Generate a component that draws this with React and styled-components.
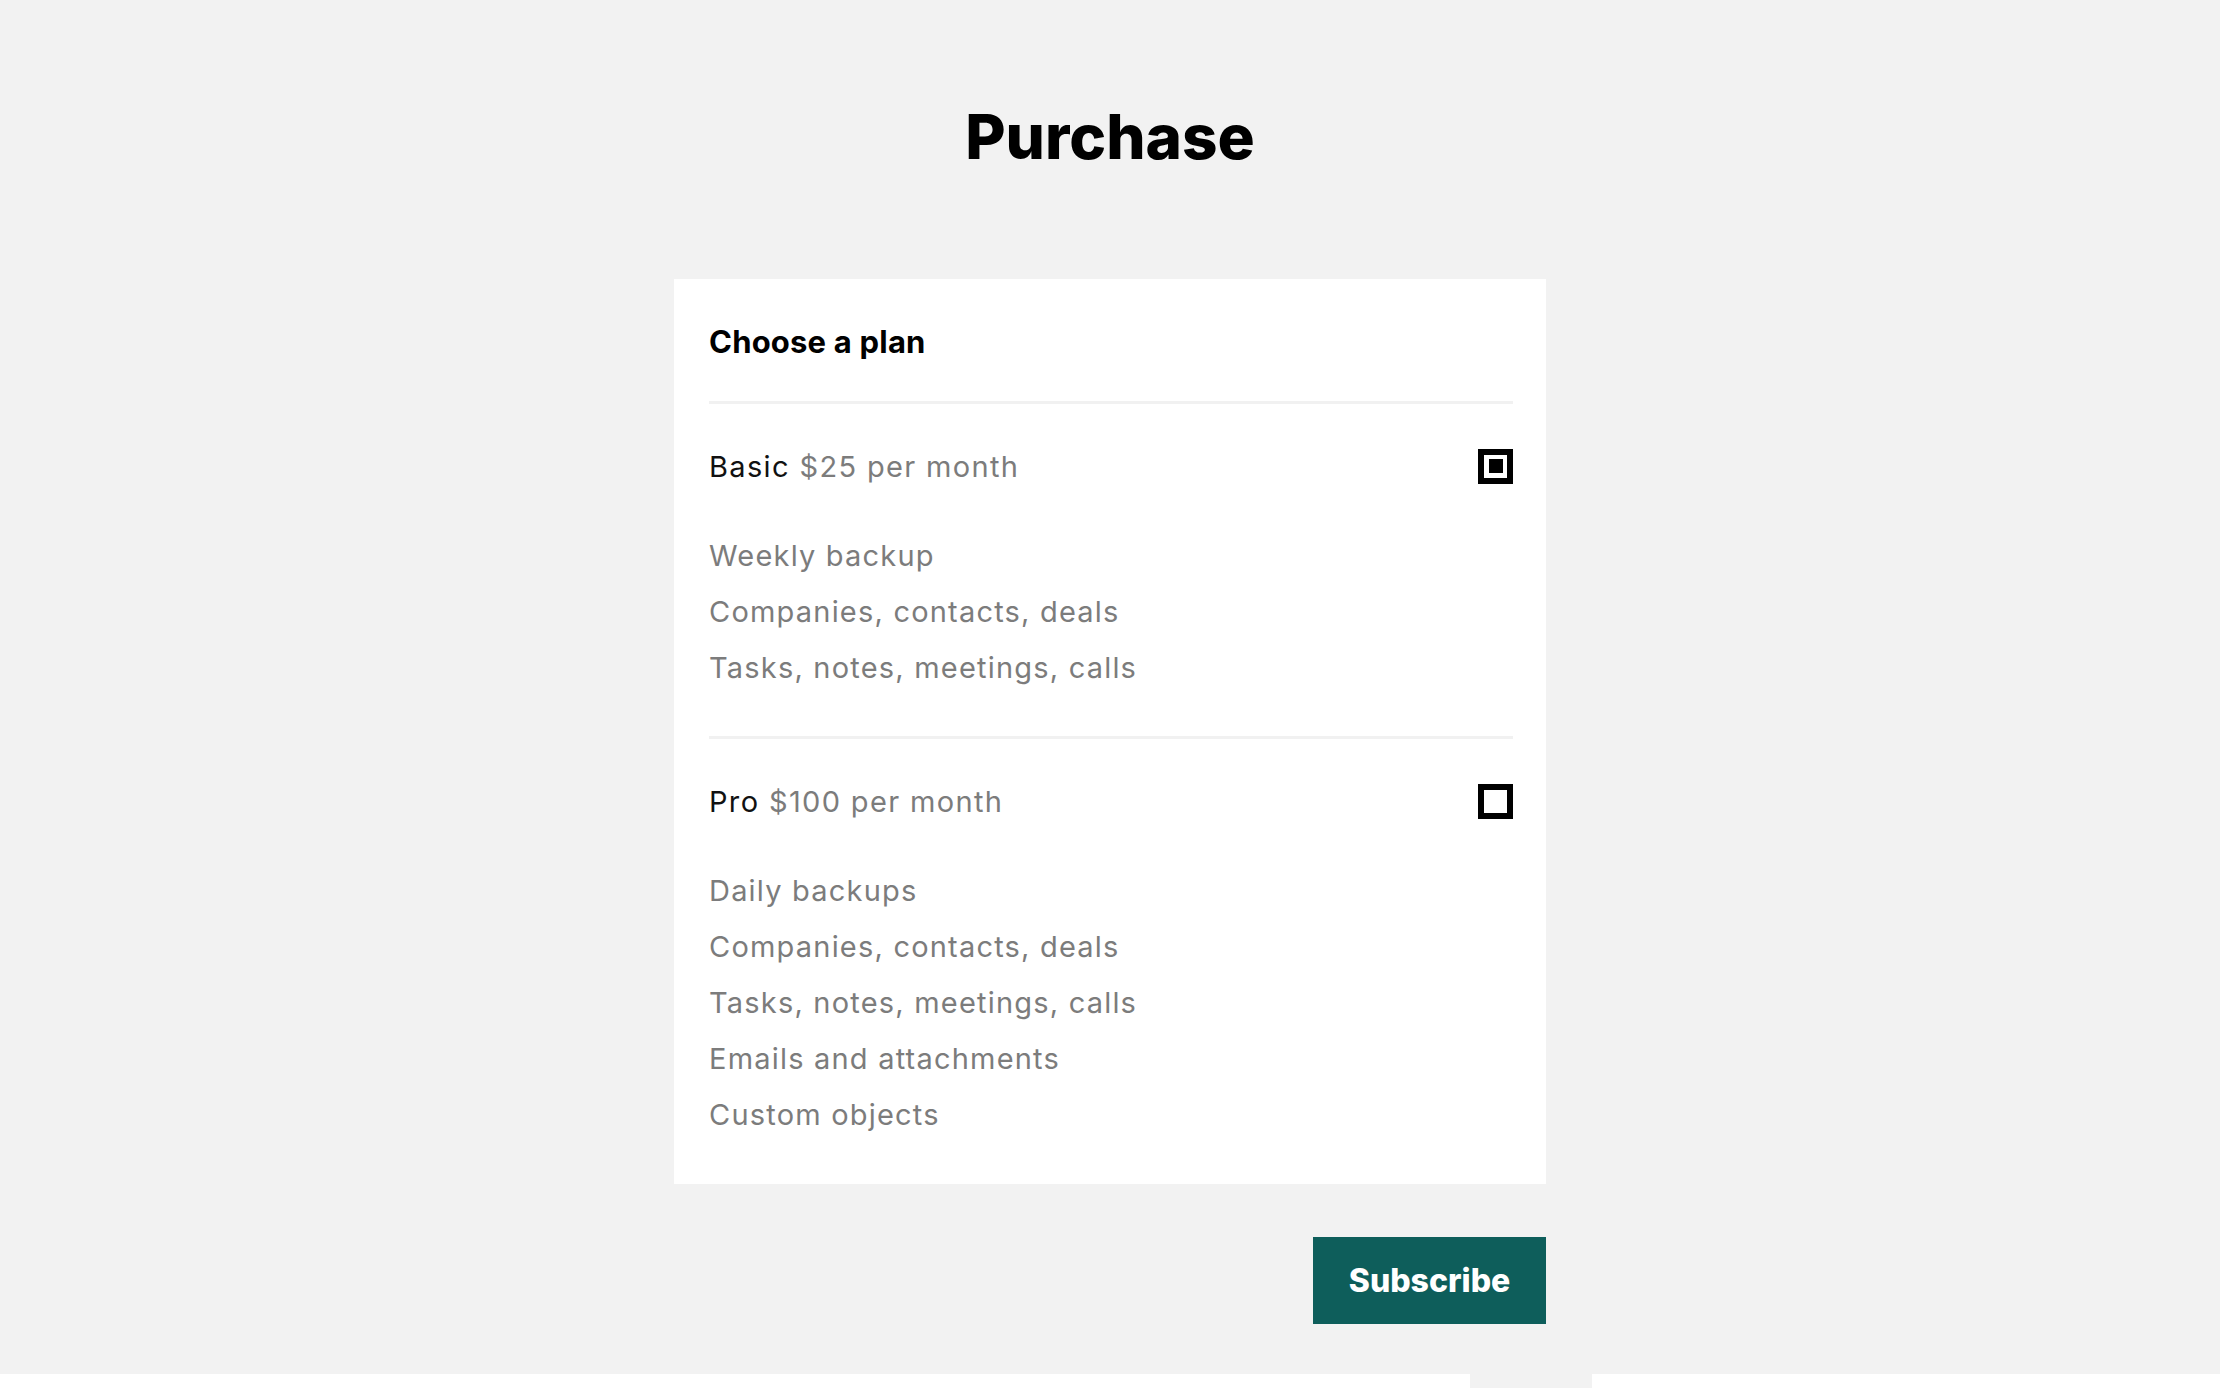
import React from "react";
import styled, { createGlobalStyle } from "styled-components";

const plans = [
  {
    id: "basic",
    name: "Basic",
    price: "$25 per month",
    features: ["Weekly backup", "Companies, contacts, deals", "Tasks, notes, meetings, calls"],
  },
  {
    id: "pro",
    name: "Pro",
    price: "$100 per month",
    features: [
      "Daily backups",
      "Companies, contacts, deals",
      "Tasks, notes, meetings, calls",
      "Emails and attachments",
      "Custom objects",
    ],
  },
];

const GlobalStyle = createGlobalStyle`
  html, body {
    margin: 0;
    padding: 0;
    background: #f2f2f2;
    font-family: Inter, "Noto Sans", "Liberation Sans", sans-serif;
    color: #000;
  }
  * {
    box-sizing: border-box;
  }
`;

//Layout components
const Page = styled.main`
  display: flex;
  flex-direction: column;
  align-items: center;
  padding: 100px 0 50px;
`;

const Title = styled.h1`
  margin: 0 0 105px;
  font-size: 62px;
  line-height: 74px;
  font-weight: 800;
`;

const Card = styled.section`
  width: 872px;
  background: #ffffff;
  padding: 44px 33px 0 35px;
`;

const CardTitle = styled.h2`
  margin: 0;
  padding-bottom: 41px;
  font-size: 31px;
  line-height: 37px;
  font-weight: 700;
  letter-spacing: 0.2px;
`;

const PlanSection = styled.div`
  border-top: 3px solid #f1f1f1;
  padding: 43px 0 40px;

  &:last-child {
    padding-bottom: 41px;
  }
`;

const PlanHeader = styled.div`
  display: flex;
  align-items: center;
  justify-content: space-between;
  height: 40px;
  cursor: pointer;
`;

const PlanName = styled.div`
  font-size: 29px;
  line-height: 40px;
  letter-spacing: 1.35px;
  color: #111111;
`;

const Price = styled.span`
  color: #7c7c7c;
`;

const Checkbox = styled.div`
  width: 35px;
  height: 35px;
  margin-top: -2px;
  border: 6px solid #000000;
  display: flex;
  align-items: center;
  justify-content: center;

  &::after {
    content: "";
    width: 14px;
    height: 14px;
    background: ${(p) => (p.$checked ? "#000000" : "transparent")};
  }
`;

const FeatureList = styled.ul`
  list-style: none;
  margin: 41px 0 0;
  padding: 0;
`;

const Feature = styled.li`
  font-size: 29px;
  line-height: 56px;
  letter-spacing: 1.2px;
  color: #7c7c7c;
`;

const Actions = styled.div`
  width: 872px;
  display: flex;
  justify-content: flex-end;
  margin-top: 53px;
`;

const SubscribeButton = styled.button`
  width: 233px;
  height: 87px;
  border: none;
  background: #0e5e5b;
  color: #ffffff;
  font-family: inherit;
  font-size: 32px;
  font-weight: 800;
  cursor: pointer;
`;

const Footer = styled.footer`
  display: grid;
  grid-template-columns: 1470px 122px 1fr;
  height: 16px;
`;

const FooterPart = styled.div`
  background: ${(p) => (p.$tab ? "#f2f2f2" : "#ffffff")};
`;

function App() {
  const [selected, setSelected] = React.useState("basic");

  return (
    <>
      <GlobalStyle />
      <Page>
        <Title>Purchase</Title>
        <Card>
          <CardTitle>Choose a plan</CardTitle>
          {plans.map((plan) => (
            <PlanSection key={plan.id}>
              <PlanHeader onClick={() => setSelected(plan.id)}>
                <PlanName>
                  {plan.name} <Price>{plan.price}</Price>
                </PlanName>
                <Checkbox $checked={selected === plan.id} />
              </PlanHeader>
              <FeatureList>
                {plan.features.map((f) => (
                  <Feature key={f}>{f}</Feature>
                ))}
              </FeatureList>
            </PlanSection>
          ))}
        </Card>
        <Actions>
          <SubscribeButton>Subscribe</SubscribeButton>
        </Actions>
      </Page>
      <Footer>
        <FooterPart />
        <FooterPart $tab />
        <FooterPart />
      </Footer>
    </>
  );
}

export default App;
